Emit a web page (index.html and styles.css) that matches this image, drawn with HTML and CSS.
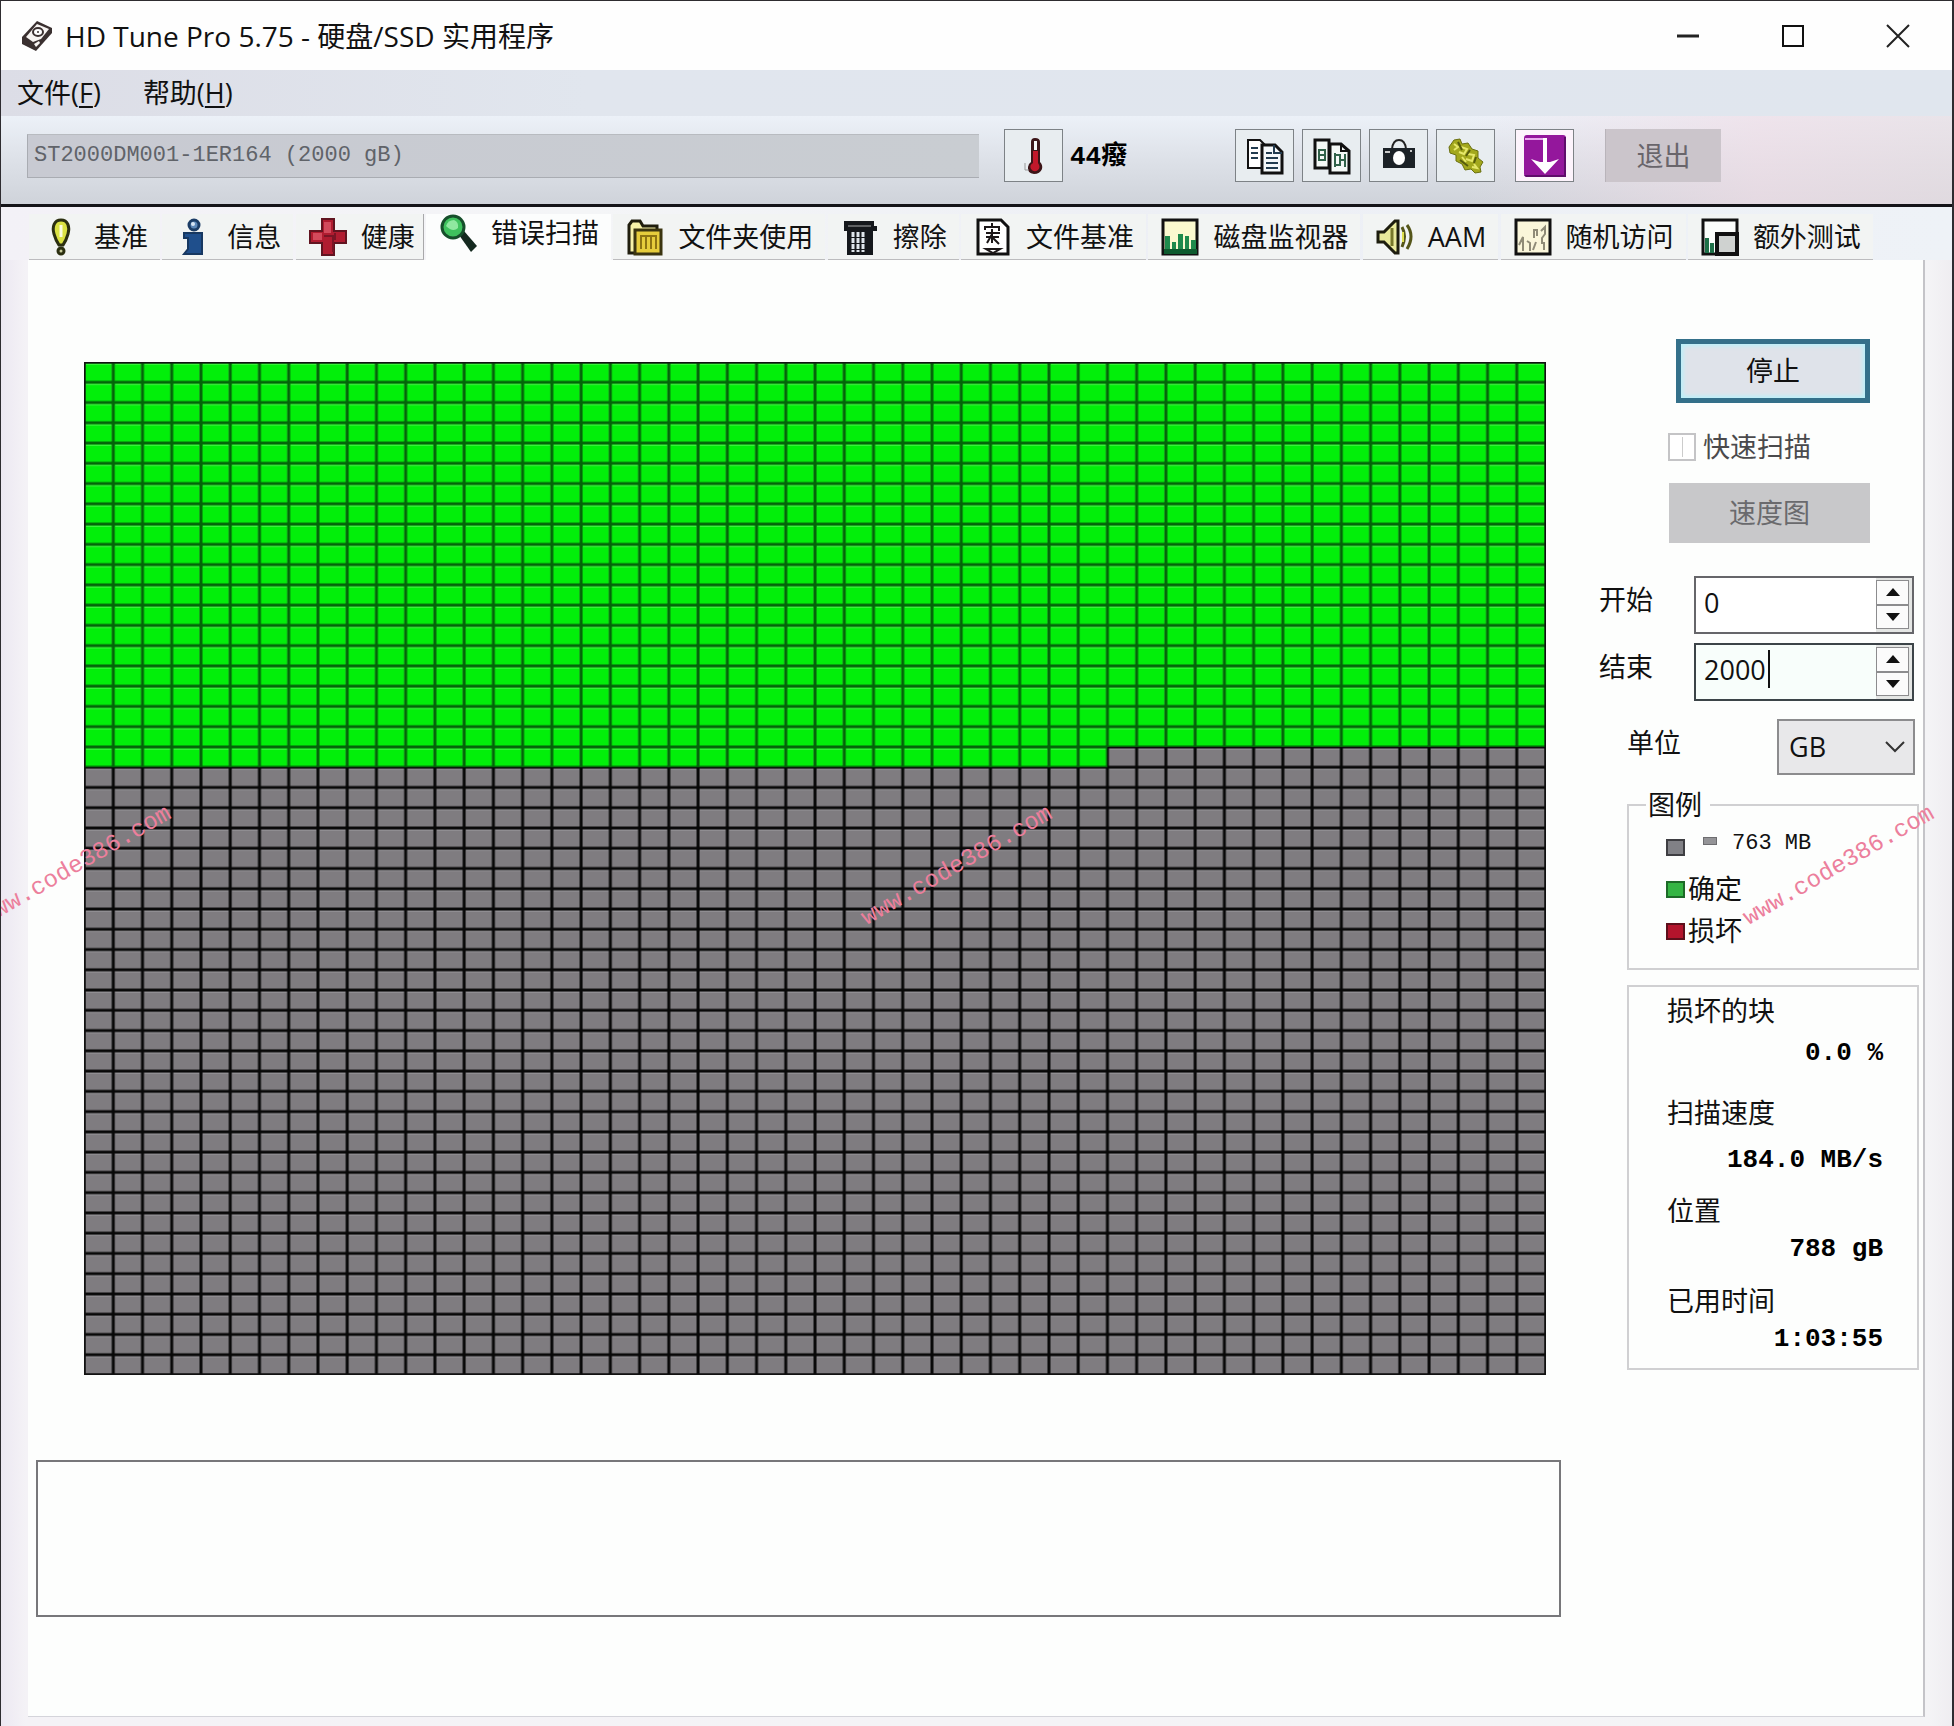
FILE: index.html
```html
<!DOCTYPE html>
<html lang="zh-CN">
<head>
<meta charset="utf-8">
<title>HD Tune Pro 5.75 - 硬盘/SSD 实用程序</title>
<link rel="stylesheet" href="styles.css">
</head>
<body>
<div class="window">
  <header class="titlebar">
    <svg class="app-icon" viewBox="0 0 34 34" aria-hidden="true">
      <path d="M2 18 17 2 32 9 32 14 16 32 2 25Z" fill="#3a3030"/>
      <path d="M6 18 17 5 29 10 21 20 13 23Z" fill="#f7f4f2"/>
      <ellipse cx="18" cy="13" rx="5" ry="4" fill="#fff" stroke="#3a3030" stroke-width="2"/>
      <circle cx="18" cy="13" r="1" fill="#3a3030"/>
      <path d="M14 25 19 22 20 24 16 28Z" fill="#f7f4f2"/>
    </svg>
    <h1 class="title">HD Tune Pro 5.75 - 硬盘/SSD 实用程序</h1>
    <div class="caption-buttons">
      <button class="caption" aria-label="最小化"><svg viewBox="0 0 24 24"><path d="M1 12H23" stroke="#222" stroke-width="3"/></svg></button>
      <button class="caption" aria-label="最大化"><svg viewBox="0 0 24 24"><path d="M2 2H22V22H2Z" fill="none" stroke="#111" stroke-width="2"/></svg></button>
      <button class="caption" aria-label="关闭"><svg viewBox="0 0 24 24"><path d="M1 1 23 23M23 1 1 23" stroke="#222" stroke-width="2"/></svg></button>
    </div>
  </header>

  <nav class="menubar">
    <button class="menu">文件(<u>F</u>)</button>
    <button class="menu">帮助(<u>H</u>)</button>
  </nav>

  <div class="toolbar">
    <select class="drive" aria-label="驱动器" disabled><option>ST2000DM001-1ER164 (2000 gB)</option></select>
    <div class="temperature">
      <button class="tool" aria-label="温度">
        <svg viewBox="0 0 40 40"><path d="M17 6Q17 2 21 2Q26 2 26 6V26Q29 29 28 33Q26 38 20 38Q13 37 14 31Q14 28 17 26Z" fill="#3c1518"/><path d="M20 5H23V14H20Z" fill="#f4f4f4"/><path d="M19 15H24V27Q27 31 24 34Q20 37 17 33Q15 29 19 27Z" fill="#c2182b"/><path d="M11 27V34H15" stroke="#999" stroke-width="1" fill="none"/></svg>
      </button>
      <span class="degrees">44癈</span>
    </div>
    <div class="tools">
      <button class="tool" aria-label="复制文本">
        <svg viewBox="0 0 40 40"><path d="M3 4H15L20 9V32H3Z" fill="#fff" stroke="#111" stroke-width="2"/><path d="M6 12H13M6 17H13M6 22H13" stroke="#223c50" stroke-width="2"/><path d="M17 9H30L37 16V37H17Z" fill="#f4f8fa" stroke="#111" stroke-width="3"/><path d="M29 9V17H37M21 17H27M21 22H33M21 27H33M21 32H33" stroke="#223c50" stroke-width="2" fill="none"/></svg>
      </button>
      <button class="tool" aria-label="复制图像">
        <svg viewBox="0 0 40 40"><path d="M3 4H17V32H3Z" fill="#f4f8f6" stroke="#111" stroke-width="3"/><path d="M7 14H13V24H7ZM7 19H13" stroke="#31624a" stroke-width="2" fill="none"/><path d="M18 8H29L37 15V37H18Z" fill="#f4f8f6" stroke="#111" stroke-width="3"/><path d="M29 8V15H37" stroke="#111" stroke-width="2" fill="none"/><path d="M23 17V31M23 19H28V29H23M33 18V31M28 24H33" stroke="#31624a" stroke-width="2" fill="none"/></svg>
      </button>
      <button class="tool" aria-label="截图">
        <svg viewBox="0 0 40 40"><path d="M13 13Q14 4 20 4Q26 4 27 13" fill="none" stroke="#222" stroke-width="2"/><path d="M4 12H36V32H4Z" fill="#1c2227"/><path d="M6 16H11" stroke="#ccc" stroke-width="2"/><ellipse cx="20" cy="22" rx="6" ry="7" fill="#fff"/><circle cx="32" cy="15" r="1" fill="#fff"/></svg>
      </button>
      <button class="tool" aria-label="选项">
        <svg viewBox="0 0 40 40"><path d="M3 11 8 4 14 3 16 8 22 7 26 13 32 15 32 22 37 26 34 31 35 36 29 37 25 33 19 34 16 28 10 25 10 19 4 17Z" fill="#a3a81d" stroke="#6a7010" stroke-width="1"/><path d="M8 8 12 11 8 14M15 11 21 13 18 18 13 16M22 18 28 19 26 25 20 23M16 21 20 26M28 28 31 32 26 31" stroke="#e6e86a" stroke-width="2" fill="none"/><path d="M12 6 16 14M24 14 20 20M30 21 28 27M14 24 22 30" stroke="#565c0c" stroke-width="2"/></svg>
      </button>
      <button class="tool tool-save" aria-label="保存">
        <svg viewBox="0 0 44 44"><rect x="1" y="1" width="42" height="42" rx="3" fill="#94179c"/><path d="M1 41H43V43H3ZM41 3H43V43H41Z" fill="#5f0d6b"/><path d="M2 5H22" stroke="#e9a9ee" stroke-width="2" fill="none"/><path d="M22 4V32" stroke="#fff" stroke-width="4"/><path d="M8 25 17 28H27L36 25 22 40Z" fill="#fff"/></svg>
      </button>
    </div>
    <button class="exit" disabled>退出</button>
  </div>

  <div class="tabs" role="tablist">
    <button class="tab" role="tab">
      <svg viewBox="0 0 38 38"><path d="M19 2C12 2 10 9 12 16Q14 23 17 27H21Q24 23 26 16C28 9 26 2 19 2Z" fill="#dbe243" stroke="#2b2f10" stroke-width="3"/><path d="M19 7V19" stroke="#fbfde0" stroke-width="3"/><circle cx="19" cy="33" r="3" fill="#c8cc9a" stroke="#2b2f10" stroke-width="3"/></svg>基准</button>
    <button class="tab" role="tab">
      <svg viewBox="0 0 38 38"><circle cx="19" cy="7" r="5" fill="#5d88b8" stroke="#1c3d66" stroke-width="3"/><circle cx="18" cy="6" r="2" fill="#d8e6f4"/><path d="M9 15H27V36H9L13 31V20H9Z" fill="#1f4f8c" stroke="#173861" stroke-width="2"/></svg>信息</button>
    <button class="tab tab-last" role="tab">
      <svg viewBox="0 0 38 38"><path d="M13 1H25V13H37V25H25V37H13V25H1V13H13Z" fill="#b01c30" stroke="#611420" stroke-width="2"/><path d="M15 4H22V15H15ZM4 15H13V22H4Z" fill="#d24a5c"/><path d="M15 18H24V34M26 15V22" stroke="#7a1525" stroke-width="2" fill="none"/></svg>健康</button>
    <button class="tab tab-active" role="tab" aria-selected="true">
      <svg viewBox="0 0 38 38"><path d="M20 21 25 17 38 32 32 38Z" fill="#14291f"/><circle cx="14" cy="13" r="11" fill="#3fc25e" stroke="#164f2b" stroke-width="3"/><path d="M7 12Q9 6 15 6Q20 8 19 14Q14 19 7 12Z" fill="#8fe8a0"/></svg>错误扫描</button>
    <button class="tab" role="tab">
      <svg viewBox="0 0 38 38"><path d="M3 35V7L6 3H14L17 8H31V35Z" fill="#f7f2a8" stroke="#1f1d0d" stroke-width="3"/><path d="M9 12H35V36H9Z" fill="#e6cd3c" stroke="#3b3510" stroke-width="3"/><path d="M14 18H31M15 18V31M20 18V31M25 18V31M30 18V31" stroke="#8d7413" stroke-width="2"/></svg>文件夹使用</button>
    <button class="tab" role="tab">
      <svg viewBox="0 0 38 38"><path d="M3 3H33V8H36V13H3Z" fill="#15181c"/><path d="M6 12H32V37H6Z" fill="#15181c"/><path d="M7 8H30" stroke="#aaa" stroke-width="1"/><path d="M12 14V34M17 14V34M22 14V34" stroke="#dfe6ec" stroke-width="3" stroke-dasharray="5 1"/></svg>擦除</button>
    <button class="tab" role="tab">
      <svg viewBox="0 0 38 38"><path d="M4 2H27L34 9V36H4Z" fill="#fff" stroke="#111" stroke-width="3"/><path d="M18 5V10M11 12V9H25V13M12 15H26M18 11V25M12 19H25M13 25 17 18 25 26M12 31H26L19 35Z" stroke="#1c1718" stroke-width="2" fill="none"/></svg>文件基准</button>
    <button class="tab" role="tab">
      <svg viewBox="0 0 38 38"><path d="M2 2H36V36H2Z" fill="#fbf9cf" stroke="#111" stroke-width="3"/><path d="M4 18H9V35H4ZM11 24H15V35H11ZM17 16H22V35H17ZM24 18H28V35H24ZM30 22H35V35H30Z" fill="#1e8a4c"/><path d="M3 31H36V36H3Z" fill="#0d5a2e"/></svg>磁盘监视器</button>
    <button class="tab" role="tab">
      <svg viewBox="0 0 38 38"><path d="M2 14H8L19 3H22V35H19L8 24H2Z" fill="#e9ea9b" stroke="#1d1d0e" stroke-width="3"/><path d="M16 10V28" stroke="#77782a" stroke-width="3"/><path d="M26 9Q31 18 26 29M31 7Q39 18 31 31" stroke="#55561a" stroke-width="3" fill="none"/><path d="M27 14V24" stroke="#dfe04e" stroke-width="2"/></svg>AAM</button>
    <button class="tab" role="tab">
      <svg viewBox="0 0 38 38"><path d="M2 2H36V36H2Z" fill="#faf6da" stroke="#111" stroke-width="3"/><path d="M5 27 9 19V33M13 23 16 25V33M20 20V12H23V18M27 13 31 9V16L28 20V26M22 24 19 32M30 24V32" stroke="#8f8b77" stroke-width="2" fill="none"/></svg>随机访问</button>
    <button class="tab" role="tab">
      <svg viewBox="0 0 38 38"><path d="M2 2H36V36H2Z" fill="#fbfdfb" stroke="#111" stroke-width="3"/><path d="M4 20H8V35H4ZM9 25H13V35H9Z" fill="#1e7048"/><path d="M16 16H36V36H16Z" fill="#cfd2d0" stroke="#111" stroke-width="4"/></svg>额外测试</button>
  </div>

  <main class="panel">
    <section class="results">
      <svg class="blockmap" viewBox="0 0 1450 1000" preserveAspectRatio="none" role="img" aria-label="磁盘块扫描图">
        <defs>
          <pattern id="pending" width="29" height="20" patternUnits="userSpaceOnUse">
            <rect width="29" height="20" fill="#7f7c80"/>
            <path d="M2 2H28V18" fill="none" stroke="#97959a" stroke-width="1"/>
            <path d="M0 0V20M29 0V20M0 0H29M0 20H29" stroke="#080808" stroke-width="3"/>
          </pattern>
          <pattern id="good" width="29" height="20" patternUnits="userSpaceOnUse">
            <rect width="29" height="20" fill="#02ef0a"/>
            <path d="M2 2H28V18" fill="none" stroke="#4cf54c" stroke-width="1"/>
            <path d="M0 0V20M29 0V20M0 0H29M0 20H29" stroke="#04640a" stroke-width="3"/>
          </pattern>
        </defs>
        <rect width="1450" height="1000" fill="url(#pending)"/>
        <path d="M0 0H1450V380H1015V400H0Z" fill="url(#good)"/>
        <rect width="1450" height="1000" fill="none" stroke="#111" stroke-width="3"/>
      </svg>
      <div class="log"></div>
    </section>

    <aside class="side">
      <button class="stop">停止</button>
      <label class="quick"><input type="checkbox" disabled>快速扫描</label>
      <button class="speedmap" disabled>速度图</button>

      <div class="field">
        <label for="start">开始</label>
        <div class="spin">
          <input id="start" type="text" value="0">
          <div class="steps">
            <button class="step" aria-label="增加开始"><svg viewBox="0 0 14 8"><path d="M0 8 7 0 14 8Z"/></svg></button>
            <button class="step" aria-label="减少开始"><svg viewBox="0 0 14 8"><path d="M0 0H14L7 8Z"/></svg></button>
          </div>
        </div>
      </div>
      <div class="field">
        <label for="end">结束</label>
        <div class="spin spin-focus">
          <input id="end" type="text" value="2000"><span class="caret"></span>
          <div class="steps">
            <button class="step" aria-label="增加结束"><svg viewBox="0 0 14 8"><path d="M0 8 7 0 14 8Z"/></svg></button>
            <button class="step" aria-label="减少结束"><svg viewBox="0 0 14 8"><path d="M0 0H14L7 8Z"/></svg></button>
          </div>
        </div>
      </div>
      <div class="field unit">
        <label for="unit">单位</label>
        <div class="select">
          <select id="unit"><option>GB</option></select>
          <svg viewBox="0 0 20 12"><path d="M1 1 10 10 19 1" fill="none" stroke="#333" stroke-width="2"/></svg>
        </div>
      </div>

      <fieldset class="group legend">
        <legend>图例</legend>
        <ul>
          <li><span class="swatch"></span><span class="block"></span><span class="size">763 MB</span></li>
          <li><span class="swatch swatch-ok"></span>确定</li>
          <li><span class="swatch swatch-bad"></span>损坏</li>
        </ul>
      </fieldset>

      <dl class="group stats">
        <dt>损坏的块</dt><dd>0.0 %</dd>
        <dt>扫描速度</dt><dd>184.0 MB/s</dd>
        <dt>位置</dt><dd>788 gB</dd>
        <dt>已用时间</dt><dd>1:03:55</dd>
      </dl>
    </aside>
  </main>

  <span class="mark mark-left">www.code386.com</span>
  <span class="mark mark-center">www.code386.com</span>
  <span class="mark mark-right">www.code386.com</span>
</div>
</body>
</html>
```
FILE: styles.css
```css
* { box-sizing: border-box; }

body {
  margin: 0;
  font: 27px/36px "Open Sans", "Noto Sans CJK SC", sans-serif;
  color: #111;
}

button, input, select {
  font: inherit;
  color: inherit;
  margin: 0;
  padding: 0;
  border: 0;
  border-radius: 0;
  background: none;
  appearance: none;
}

svg { display: block; }

.window {
  position: relative;
  display: flex;
  flex-direction: column;
  min-height: 100vh;
  overflow: hidden;
  border: 1px solid #2e2c30;
  border-right-width: 2px;
  background: linear-gradient(90deg, #ece8f2, #f4f2f6 24px, #f4f4f6 calc(100% - 24px), #efedf1);
}

/* title bar */
.titlebar {
  display: flex;
  align-items: center;
  height: 69px;
  padding: 0 2px 0 19px;
  background: #fefefe;
}
.app-icon { width: 34px; height: 34px; }
.title {
  flex: 1;
  margin: 0 0 0 11px;
  font-size: 28px;
  font-weight: 400;
}
.caption-buttons { display: flex; }
.caption {
  display: grid;
  place-items: center;
  width: 105px;
  height: 68px;
}
.caption svg { width: 24px; height: 24px; }

/* menu and toolbar */
.menubar {
  display: flex;
  gap: 42px;
  height: 46px;
  padding: 0 16px;
  align-items: center;
  background: linear-gradient(90deg, #dcdde6, #e1e6ee 30%, #e0e6ee);
}
.menu u { text-underline-offset: 3px; }

.toolbar {
  display: flex;
  align-items: center;
  height: 91px;
  padding: 0 231px 9px 26px;
  border-bottom: 3px solid #141418;
  background:
    linear-gradient(90deg, transparent 75%, #f0dde6aa 90%, #e8dde2aa),
    linear-gradient(#ecf1f8, #e0e4eb 40%, #cfd3da);
}
.drive {
  flex: 1;
  height: 44px;
  padding-left: 6px;
  border: 1px solid #a9acb2;
  border-top-color: #b8bbc0;
  border-right: 0;
  background: linear-gradient(90deg, #c8cad2, #c9cdd2);
  color: #606369;
  opacity: 1;
  font: 22px/42px "Liberation Mono", monospace;
}
.temperature {
  display: flex;
  align-items: center;
  gap: 7px;
  width: 231px;
  margin: 0 0 0 25px;
}
.degrees {
  padding-top: 3px;
  font: bold 26px/36px "Liberation Mono", "Noto Sans CJK SC", monospace;
  color: #000;
}
.tools { display: flex; gap: 8px; }
.tool {
  display: grid;
  place-items: center;
  width: 59px;
  height: 53px;
  border: 1px solid #7d8286;
  background: #e8edf0;
}
.tool svg { width: 40px; height: 40px; }
.tool-save { margin-left: 12px; background: #fdf4fc; }
.tool-save svg { width: 44px; height: 44px; }
.exit {
  width: 116px;
  height: 53px;
  margin-left: 31px;
  background: #cbc5cb;
  border-left: 1px solid #b9b4ba;
  color: #69656b;
}

/* tabs */
.tabs {
  display: flex;
  justify-content: space-between;
  height: 53px;
  padding: 7px 79px 0 28px;
  background: linear-gradient(90deg, #f3f1f7, #f4f5f7 30%, #edeff5 60%, #eef2f7);
}
.tab {
  display: flex;
  align-items: center;
  gap: 14px;
  padding: 0 12px 0 13px;
  border-bottom: 1px solid #bcbcbe;
  background: #f2f4f3;
  white-space: nowrap;
}
.tab svg { width: 38px; height: 38px; }
.tab-last { padding-right: 8px; border-right: 1px solid #a8a8aa; }
.tab-active {
  padding-bottom: 8px;
  border-bottom-color: transparent;
  background: #fcfdfd;
}

/* page */
.panel {
  flex: 1;
  display: grid;
  grid-template-columns: 1fr 362px;
  margin: 0 27px 10px;
  border-right: 2px solid #c4c4c8;
  border-bottom: 1px solid #d4d4da;
  background: #fdfefd;
}
.results { padding: 102px 0 99px 8px; }
.blockmap {
  width: calc(100% - 63px);
  height: auto;
  aspect-ratio: 1462 / 1013;
  margin-left: 48px;
}
.log {
  height: 157px;
  margin-top: 85px;
  border: 2px solid #77777a;
}

.side {
  display: flex;
  flex-direction: column;
  padding: 79px 4px 0 38px;
}
.stop {
  align-self: flex-end;
  width: 194px;
  height: 64px;
  margin-right: 49px;
  border: 5px solid #34708a;
  background: #dfe3ea;
  box-shadow: inset 0 0 4px 2px #b8f2fb;
}
.quick {
  display: flex;
  align-items: center;
  gap: 7px;
  margin: 26px 0 18px 69px;
  color: #4a4a4c;
}
.quick input {
  width: 28px;
  height: 28px;
  border: 2px solid #c4c4c6;
  background: linear-gradient(#ccc, #ccc) center / 1px 20px no-repeat #fff;
}
.speedmap {
  align-self: flex-end;
  width: 201px;
  height: 60px;
  margin: 0 49px 33px 0;
  background: #c8c8ca;
  color: #6a6a6d;
}
.field {
  display: flex;
  justify-content: space-between;
  margin-bottom: 9px;
}
.field label { padding-top: 6px; }
.spin {
  position: relative;
  display: flex;
  width: 220px;
  height: 58px;
  margin-right: 5px;
  border: 2px solid #66666a;
  background: #fff;
}
.spin-focus { border-color: #3c4448; background: #f8fefb; }
.spin input { flex: 1; min-width: 0; padding: 0 0 4px 8px; outline: 0; }
.caret {
  position: absolute;
  top: 5px;
  left: 72px;
  width: 2px;
  height: 38px;
  background: #111;
}
.steps {
  display: flex;
  flex-direction: column;
  width: 36px;
  padding: 2px 3px 3px 0;
  background: #e4e6e4;
}
.step {
  flex: 1;
  display: grid;
  place-items: center;
  border: 1px solid #8c8c8e;
  background: #fbfbfb;
}
.step svg { width: 14px; height: 8px; fill: #111; }
.unit { margin: 9px 0 12px 28px; }
.select {
  position: relative;
  width: 138px;
  height: 56px;
  margin-right: 4px;
}
.select select {
  width: 100%;
  height: 100%;
  padding-left: 10px;
  border: 2px solid #8c8c8e;
  background: #e8e8ea;
}
.select svg {
  position: absolute;
  top: 22px;
  right: 10px;
  width: 20px;
  height: 12px;
}

.group {
  margin: 0 0 0 28px;
  border: 2px solid #d0d0d2;
}
.legend {
  height: 183px;
  padding: 0 0 0 37px;
}
.legend legend { margin-left: -20px; padding: 0 8px 0 2px; }
.legend ul { margin: 0; padding: 3px 0 0; list-style: none; }
.legend li { display: flex; align-items: center; gap: 3px; height: 42px; }
.swatch {
  width: 19px;
  height: 17px;
  border: 2px solid #3e3e42;
  background: #818186;
}
.swatch-ok { background: #35b544; border-color: #1d6a28; }
.swatch-bad { background: #b3142c; border-color: #5d0f1b; }
.block {
  width: 14px;
  height: 8px;
  margin: 0 12px 12px 15px;
  border: 1px solid #6d6d70;
  background: #949497;
}
.size {
  padding-bottom: 6px;
  font: 22px/28px "Liberation Mono", monospace;
}

.stats {
  display: grid;
  grid-template-rows: 42px 60px 47px 51px 38px 52px 38px 47px;
  margin-top: 15px;
  padding: 6px 34px 0 38px;
}
.stats dd {
  margin: 0;
  text-align: right;
  color: #000;
  font: bold 26px/36px "Liberation Mono", monospace;
}

/* overlay marks across the window */
.mark {
  position: absolute;
  font: 24px/28px "Liberation Mono", monospace;
  color: #ec7f9c;
  transform: rotate(-30deg);
  pointer-events: none;
}
.mark-left { left: -33px; top: 851px; }
.mark-center { left: 848px; top: 851px; }
.mark-right { left: 1730px; top: 851px; }
```
